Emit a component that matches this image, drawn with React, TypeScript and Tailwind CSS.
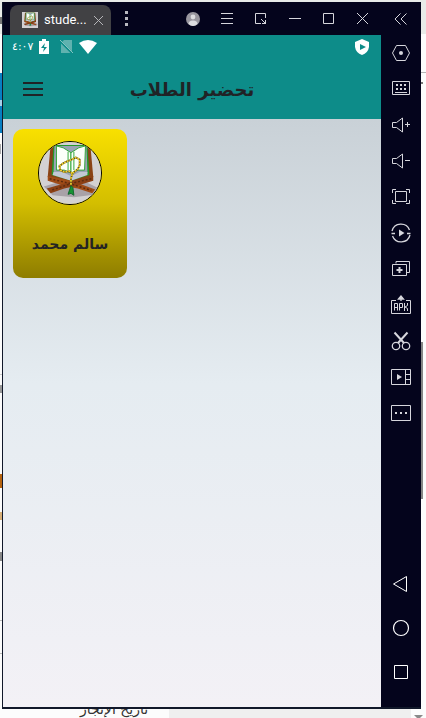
import type { ReactNode } from "react";

function Glyph({ children, size = 20 }: { children: ReactNode; size?: number }) {
  return (
    <svg
      width={size}
      height={size}
      viewBox={`0 0 ${size} ${size}`}
      fill="none"
      stroke="currentColor"
      strokeWidth="1"
      aria-hidden="true"
      className="shrink-0"
    >
      {children}
    </svg>
  );
}

function BookArt({ className }: { className: string }) {
  const rosary = "M33 44V37L35 32 40 28 42 24 42 18 38 16 34 18 29 20 25 22 21 25 22 29 26 31 31 30 35 33";
  return (
    <svg viewBox="0 0 64 64" className={className} aria-hidden="true">
      <rect width="64" height="64" fill="#d3d1d3" />
      <path d="M5 46 18 42H50L62 48 60 54 36 57 14 55Z" fill="#a9a2a8" />
      <path d="M12 3 9 36 22 40 33 43 45 40 56 36 53 3Z" fill="#8a4316" />
      <path d="M15 3 13 34 33 40 52 34 50 3Z" fill="#25982a" />
      <path d="M16 4 15 32 33 38 50 32 49 4Z" fill="#9aa3b5" />
      <path d="M15 31 24 31 33 35 42 31 50 31 50 34 33 40 14 34Z" fill="#c3c8d4" />
      <path d="M18 4 25 6 33 11V32L26 29H18Z" fill="#fbfffb" stroke="#31a638" />
      <path d="M48 4 41 6 33 11V32L40 29H47Z" fill="#fbfffb" stroke="#31a638" />
      <path d="M30 10V29M36 10V29" stroke="#31a638" />
      <path d="M9 35 28 39 42 43 58 49 55 53 40 48 28 46 9 40Z" fill="#a04c17" />
      <path d="M56 35 40 39 25 43 8 48 12 53 26 48 40 45 56 40Z" fill="#8b4015" />
      <path d="M11 38 29 42 54 50M54 38 36 42 12 50" stroke="#5c2b10" strokeWidth="1.5" strokeDasharray="2 2" fill="none" />
      <path d={rosary} fill="none" stroke="#51471f" strokeWidth="1.8" />
      <path d={rosary} fill="none" stroke="#f0cf2c" strokeWidth="1.8" strokeDasharray="2 1" />
      <path d="M33 45 30 54 33 53 36 55 35 47Z" fill="#159432" stroke="#12662c" />
    </svg>
  );
}

const windowButtons: { label: string; icon: ReactNode }[] = [
  {
    label: "Account",
    icon: (
      <Glyph>
        <circle cx="10" cy="10" r="7" fill="#99979f" stroke="none" />
        <circle cx="10" cy="8" r="2.4" fill="#dddde0" stroke="none" />
        <path d="M5.5 15Q5.5 11.5 10 11.5T14.5 15Q10 19 5.5 15Z" fill="#dddde0" stroke="none" />
      </Glyph>
    ),
  },
  { label: "Menu", icon: <Glyph><path d="M4 4.5H16M4 9.5H16M4 14.5H16" /></Glyph> },
  {
    label: "Resize",
    icon: <Glyph><path d="M10 14.5H4.5V4.5H14.5V9M10 10 15 15M11 14.5H14.5V11" /></Glyph>,
  },
  { label: "Minimize", icon: <Glyph><path d="M4 9.5H16" /></Glyph> },
  { label: "Maximize", icon: <Glyph><path d="M4.5 4.5H14.5V14.5H4.5Z" /></Glyph> },
  { label: "Close", icon: <Glyph><path d="M4 4 15 15M15 4 4 15" /></Glyph> },
];

const speaker = <path d="M1.5 7.5H5.5L11.5 3V17L5.5 12.5H1.5Z" />;

const tools: { label: string; icon: ReactNode }[] = [
  {
    label: "Settings",
    icon: <Glyph><path d="M5.5 2.5H14.5L18.5 10 14.5 17.5H5.5L1.5 10Z" /><circle cx="10" cy="10" r="2" fill="currentColor" stroke="none" /></Glyph>,
  },
  {
    label: "Keyboard",
    icon: (
      <Glyph>
        <path d="M1.5 2.5H18.5V15.5H1.5ZM4 13.5H16" />
        <path d="M5 6H7M9 6H11M13 6H15M5 10H7M9 10H11M13 10H15" strokeWidth="2" />
      </Glyph>
    ),
  },
  { label: "Volume up", icon: <Glyph>{speaker}<path d="M14 9.5H19M16.5 7V12" /></Glyph> },
  { label: "Volume down", icon: <Glyph>{speaker}<path d="M14 9.5H19" /></Glyph> },
  {
    label: "Full screen",
    icon: <Glyph><path d="M4.5 4.5H15.5V14.5H4.5ZM1.5 6V2.5H5M15 2.5H18.5V6M18.5 13V16.5H15M5 16.5H1.5V13" /></Glyph>,
  },
  {
    label: "Sync",
    icon: (
      <Glyph>
        <path d="M1 8A9.2 9.2 0 0 1 18.5 7M19 12A9.2 9.2 0 0 1 1.5 13M.5 10.5H4M16 10.5H19.5" strokeWidth="1.3" />
        <path d="M8 6.5 13.5 10 8 13.5Z" fill="currentColor" stroke="none" />
      </Glyph>
    ),
  },
  {
    label: "Multi instance",
    icon: <Glyph><path d="M5 4.5V2.5H18.5V13.5H16M1.5 5.5H15.5V16.5H1.5Z" /><path d="M5.5 11H11.5M8.5 8V14" strokeWidth="2" /></Glyph>,
  },
  {
    label: "Install APK",
    icon: (
      <Glyph>
        <path d="M5 5.5H.5V18.5H19.5V5.5H15M3.5 15.5V8.5H6.5V15.5M3.5 12.5H6.5M8.5 15.5V8.5H11.5V12.5H8.5M13.5 8V16M16.5 8V10.5L14 12 16.5 13.5V16" />
        <path d="M10 6V2M7.5 4 10 1 12.5 4Z" strokeWidth="1.3" fill="currentColor" />
      </Glyph>
    ),
  },
  {
    label: "Screenshot",
    icon: (
      <Glyph>
        <path d="M3.5 1.5 13 12M16.5 1.5 7 12" strokeWidth="2" />
        <circle cx="5" cy="15" r="3.7" strokeWidth="1.3" />
        <circle cx="15" cy="15" r="3.7" strokeWidth="1.3" />
      </Glyph>
    ),
  },
  {
    label: "Record",
    icon: <Glyph><path d="M.5 2.5H19.5V17.5H.5ZM14.5 2.5V17.5M14.5 7.5H19.5M14.5 12.5H19.5" /><path d="M6 7 11 10 6 13Z" fill="currentColor" stroke="none" /></Glyph>,
  },
  {
    label: "More",
    icon: <Glyph><path d="M.5 2.5H19.5V17.5H.5Z" /><path d="M4 10H6M9 10H11M14 10H16" strokeWidth="2" /></Glyph>,
  },
];

const navigation: { label: string; icon: ReactNode }[] = [
  { label: "Back", icon: <Glyph><path d="M15.5 2.5V17.5L2.5 10Z" /></Glyph> },
  { label: "Home", icon: <Glyph><circle cx="10" cy="10" r="7.5" strokeWidth="1.2" /></Glyph> },
  { label: "Recent", icon: <Glyph><path d="M3.5 3.5H16.5V16.5H3.5Z" /></Glyph> },
];

/* The browser page that shows around the edges of the emulator window. */
function PageBehind() {
  return (
    <div className="absolute inset-0 overflow-hidden bg-[#fcfcfc]">
      <div className="absolute inset-x-0 top-0 h-[34px] bg-[#e8ebe8]" />
      <div className="absolute right-0 top-[72px] h-px w-[5px] bg-[#b5b5b5]" />
      <div className="absolute right-[3px] top-[82px] h-[2px] w-[2px] bg-[#777777]" />
      <div className="absolute left-0 top-[17px] h-[7px] w-[2px] bg-[#777777]" />
      <div className="absolute left-0 top-[73px] h-[60px] w-[2px] bg-[#087fc2]" />
      <div className="absolute left-0 top-[100px] h-[6px] w-[2px] bg-[#a5d0e8]" />
      <div className="absolute left-0 top-[144px] h-[10px] w-px bg-[#aaaaaa]" />
      <div className="absolute left-0 top-[374px] h-px w-[2px] bg-[#cccccc]" />
      <div className="absolute left-0 top-[385px] h-[8px] w-[2px] bg-[#999999]" />
      <div className="absolute left-0 top-[474px] h-[14px] w-[2px] bg-[#b66410]" />
      <div className="absolute left-0 top-[512px] h-[8px] w-[2px] bg-[#d9b078]" />
      <div className="absolute left-0 top-[552px] h-[9px] w-[2px] bg-[#888888]" />
      <div className="absolute left-0 top-[620px] h-px w-[2px] bg-[#bbbbbb]" />
      <div className="absolute left-0 top-[653px] h-px w-[2px] bg-[#bbbbbb]" />
      <div className="absolute right-[3px] top-[342px] h-[157px] w-[2px] bg-[#858585]" />
      <div className="absolute bottom-0 left-[169px] right-[15px] h-[10px] bg-[#efefef]" />
      <svg width="9" height="3" className="absolute bottom-0 right-[3px]" aria-hidden="true">
        <path d="M0 0H9L6 3H3Z" fill="#8a8a8a" />
      </svg>
      <p
        dir="rtl"
        lang="ar"
        className="absolute -bottom-px left-[80px] whitespace-nowrap font-['DejaVu_Sans',sans-serif] text-[14px] leading-[20px] text-[#333333]"
      >
        تاريخ الإنجاز
      </p>
    </div>
  );
}

function TitleBar() {
  return (
    <header className="flex h-[33px] shrink-0 items-center bg-[#04041c] text-[#d6d6dc]">
      <div className="ml-[7px] mt-[3px] flex h-[30px] w-[101px] items-center rounded-t-[8px] bg-[#414144] pl-3">
        <BookArt className="h-4 w-4 shrink-0" />
        <span className="ml-[6px] flex-1 whitespace-nowrap font-['Roboto',sans-serif] text-[13px] leading-4 text-white">stude...</span>
        <button type="button" aria-label="Close tab" className="mr-[6px] text-[#b5b5b8]">
          <svg width="13" height="13" viewBox="0 0 13 13" stroke="currentColor" aria-hidden="true">
            <path d="M2 2 11 11M11 2 2 11" />
          </svg>
        </button>
      </div>
      <button type="button" aria-label="Tab options" className="flex w-[30px] justify-center">
        <svg width="3" height="16" viewBox="0 0 3 16" fill="#b9b9c0" aria-hidden="true">
          <path d="M0 0H3V3H0ZM0 6H3V9H0ZM0 12H3V15H0Z" />
        </svg>
      </button>
      <div className="ml-auto flex">
        <div className="mr-px flex">
          {windowButtons.map((button) => (
            <button key={button.label} type="button" aria-label={button.label} className="flex w-[34px] items-center justify-center">
              {button.icon}
            </button>
          ))}
        </div>
        <button type="button" aria-label="Collapse sidebar" className="flex w-10 items-center justify-center">
          <Glyph><path d="M9.5 4.5 4 10 9.5 15.5M15.5 4.5 10 10 15.5 15.5" /></Glyph>
        </button>
      </div>
    </header>
  );
}

function StatusBar() {
  return (
    <div className="flex h-6 items-center pl-[9px] pr-3 text-white">
      <span className="w-[22px] whitespace-nowrap font-['DejaVu_Sans',sans-serif] text-[11px] leading-4">٤:٠٧</span>
      <svg width="12" height="16" viewBox="0 0 12 16" className="ml-[4px]" aria-hidden="true">
        <path d="M1 2H4V0H8V2H11V15H1Z" fill="white" />
        <path d="M7 4 3 9H6L5 13 9 8H6Z" fill="#0d8c89" />
      </svg>
      <svg width="15" height="16" viewBox="0 0 15 16" className="ml-[9px]" aria-hidden="true">
        <path d="M5 1H13V14H2V4Z" fill="#5fb2af" />
        <path d="M0 1 14 15" stroke="#0d8c89" strokeWidth="2" />
        <path d="M1 1 14 14" stroke="#83c4c1" />
      </svg>
      <svg width="20" height="16" viewBox="0 0 20 16" className="ml-[4px]" aria-hidden="true">
        <path d="M1 4Q10-2 19 4L10 15Z" fill="white" />
      </svg>
      <svg width="14" height="18" viewBox="0 0 14 18" className="ml-auto" aria-hidden="true">
        <path d="M7 1 14 4V9Q13 15 7 17Q1 15 0 9V4Z" fill="white" />
        <path d="M5 6V12L11 9Z" fill="#0d8c89" />
      </svg>
    </div>
  );
}

export default function App() {
  return (
    <div className="relative flex h-screen flex-col pb-[9px] pl-[2px] pr-[5px] pt-[2px]">
      <PageBehind />
      <div className="relative flex min-h-0 flex-1 flex-col border-b-2 border-l border-[#11182a] bg-[#04041c]">
        <TitleBar />
        <div className="flex min-h-0 flex-1">
          <main className="flex min-w-0 flex-1 flex-col bg-[#f3f1f7]">
            <div className="shrink-0 bg-[#0d8c89]">
              <StatusBar />
              <div className="grid h-[60px] grid-cols-[60px_1fr_60px] items-center text-[#202326]">
                <button type="button" aria-label="القائمة" className="flex justify-center">
                  <svg width="20" height="14" viewBox="0 0 20 14" fill="currentColor" aria-hidden="true">
                    <path d="M0 0H20V2H0ZM0 6H20V8H0ZM0 12H20V14H0Z" />
                  </svg>
                </button>
                <h1 dir="rtl" lang="ar" className="whitespace-nowrap pt-[2px] text-center font-['DejaVu_Sans',sans-serif] text-[18px] font-bold leading-8">
                  تحضير الطلاب
                </h1>
              </div>
            </div>
            <div className="flex-1 bg-linear-to-b from-[#c9d1d7] via-[#e5ecf1] via-45% to-[#f3f1f6] px-[10px] pt-[10px]">
              <button
                type="button"
                className="flex h-[149px] w-[114px] flex-col items-center rounded-[10px] bg-linear-to-b from-[#f8e000] via-[#d3be00] to-[#8e7d00] pt-3 text-[#242424]"
              >
                <BookArt className="h-16 w-16 rounded-full border border-black" />
                <span dir="rtl" lang="ar" className="mt-[27px] whitespace-nowrap font-['DejaVu_Sans',sans-serif] text-[14px] font-bold leading-6">
                  سالم محمد
                </span>
              </button>
            </div>
          </main>
          <aside className="flex w-10 shrink-0 flex-col text-[#d6d6dc]">
            {tools.map((tool) => (
              <button key={tool.label} type="button" aria-label={tool.label} className="flex h-9 shrink-0 items-center justify-center">
                {tool.icon}
              </button>
            ))}
            <nav aria-label="Android" className="mb-[13px] mt-auto flex flex-col text-white">
              {navigation.map((item) => (
                <button key={item.label} type="button" aria-label={item.label} className="flex h-11 items-center justify-center">
                  {item.icon}
                </button>
              ))}
            </nav>
          </aside>
        </div>
      </div>
    </div>
  );
}
